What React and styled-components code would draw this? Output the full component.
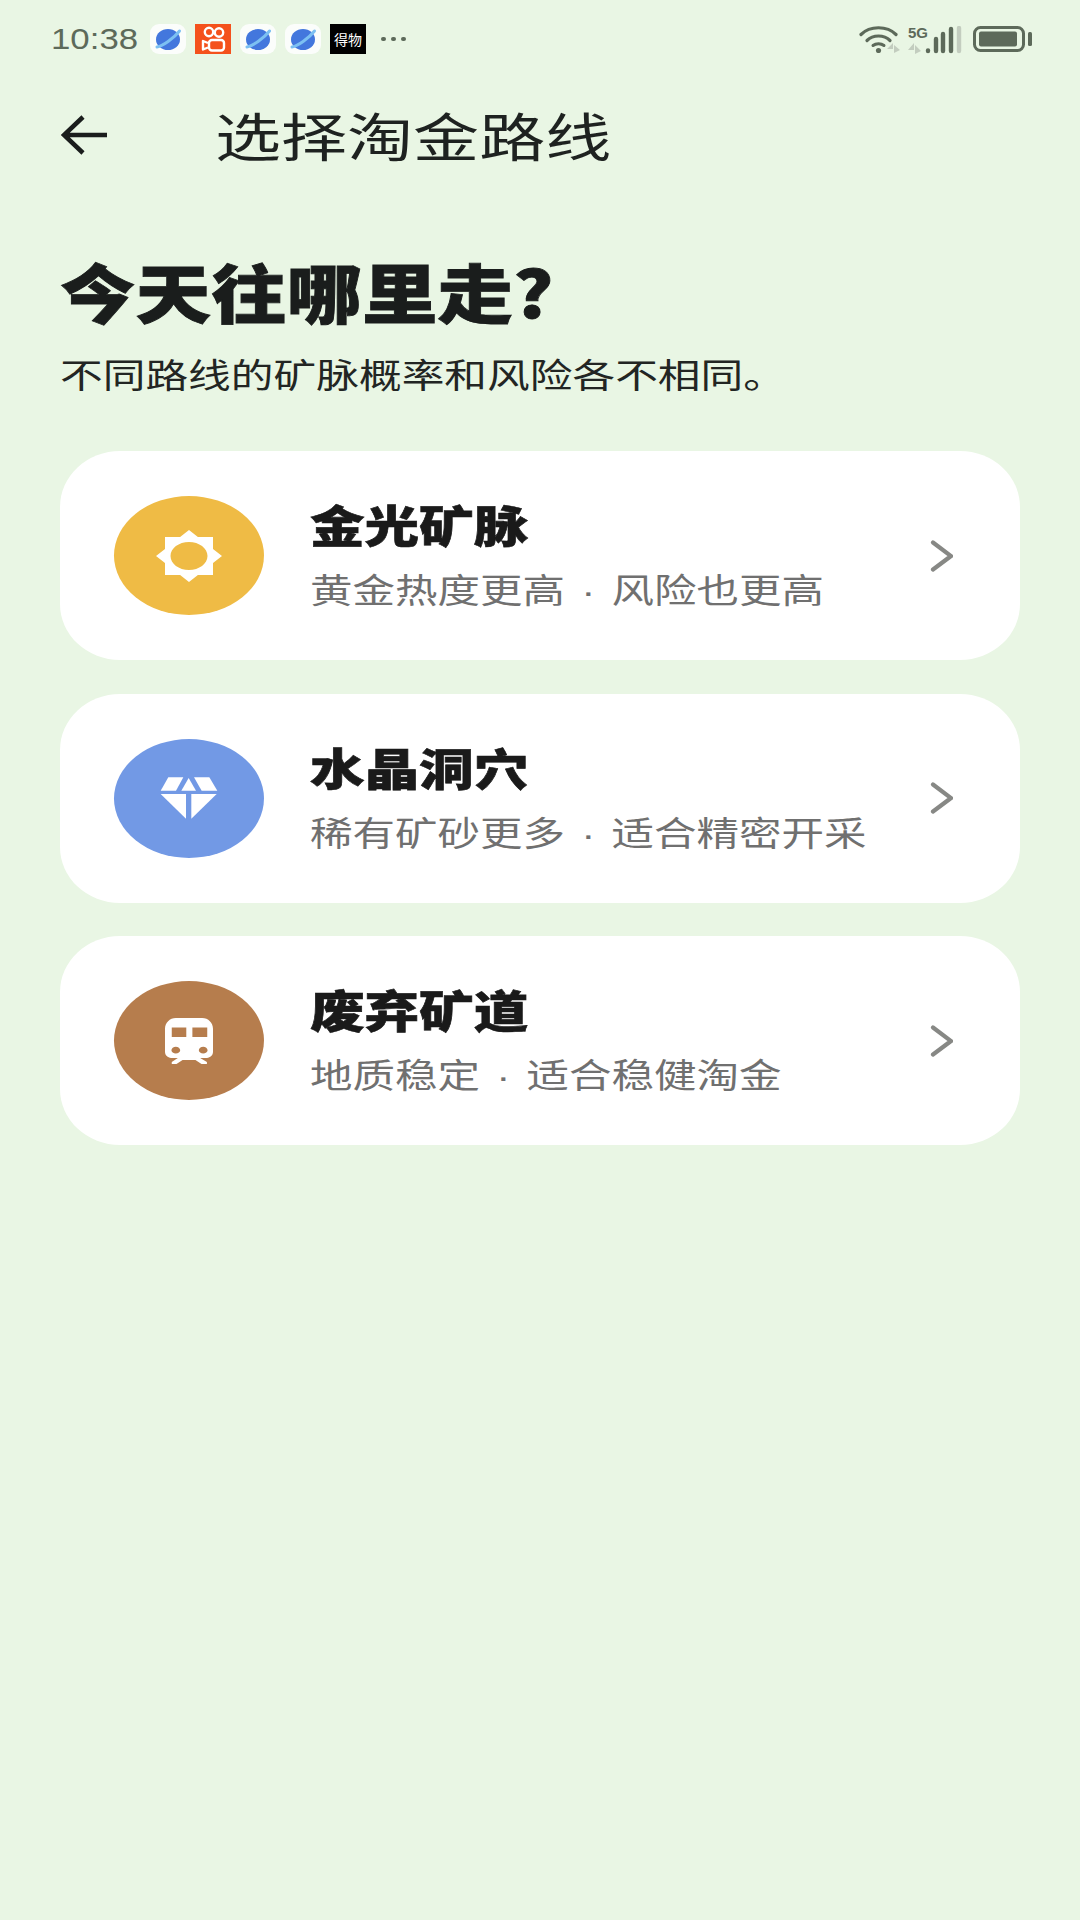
import React from "react";
import styled, { createGlobalStyle } from "styled-components";

const GlobalStyle = createGlobalStyle`
  html, body {
    margin: 0;
    padding: 0;
    background: #e9f6e4;
  }
  * {
    box-sizing: border-box;
  }
`;

const CJK = `"Noto Sans CJK SC", "Noto Sans", sans-serif`;

const Page = styled.div`
  width: 1080px;
  height: 1920px;
  overflow: hidden;
  background: #e9f6e4;
  font-family: ${CJK};
`;

const StatusBar = styled.div`
  height: 78px;
  padding: 0 47px 0 51px;
  display: flex;
  align-items: center;
`;

const Clock = styled.span`
  font-family: "Liberation Sans", sans-serif;
  font-size: 30px;
  color: #5d6a5a;
  width: 99px;
  transform: scaleX(1.16);
  transform-origin: left center;
`;

const NoticeIcons = styled.div`
  display: flex;
  align-items: center;
  gap: 9px;
  flex: 1;
`;

const Notice = styled.div`
  width: 36px;
  height: 30px;
  display: flex;
  align-items: center;
  justify-content: center;
  background: ${(p) => p.$bg};
  border-radius: ${(p) => p.$radius || 0}px;
  color: #fff;
  font-size: 14px;
  line-height: 1;
  white-space: nowrap;
`;

const Dots = styled.div`
  display: flex;
  gap: 5.5px;
  margin-left: 6px;
`;

const Dot = styled.i`
  width: 4.5px;
  height: 4.5px;
  border-radius: 50%;
  background: #5d6a5a;
`;

const SystemIcons = styled.div`
  display: flex;
  align-items: center;
`;

const SignalBox = styled.div`
  position: relative;
  width: 56px;
  height: 26px;
  margin-left: 5px;
`;

const FiveG = styled.span`
  position: absolute;
  left: 2px;
  top: -1px;
  font-family: "Liberation Sans", sans-serif;
  font-weight: 700;
  font-size: 15px;
  line-height: 16px;
  color: #5d6a5a;
`;

const TopBar = styled.div`
  height: 80px;
  margin-top: 17px;
  padding-left: 61px;
  display: flex;
  align-items: center;
`;

const TopTitle = styled.h1`
  margin: 0 0 0 106px;
  font-size: 52px;
  font-weight: 400;
  line-height: 80px;
  color: #1e2220;
  white-space: nowrap;
  transform: scaleX(1.27);
  transform-origin: left center;
`;

const Content = styled.div`
  padding: 0 60px;
`;

const Heading = styled.h2`
  margin: 75px 0 0;
  height: 80px;
  font-size: 64px;
  font-weight: 900;
  line-height: 80px;
  color: #1a1d1c;
  white-space: nowrap;
  -webkit-text-stroke: 0.8px #1a1d1c;
  transform: scaleX(1.18);
  transform-origin: left center;
`;

const SubHeading = styled.p`
  margin: 22px 0 0;
  font-size: 34px;
  line-height: 44px;
  color: #222523;
  white-space: nowrap;
  transform: scaleX(1.256);
  transform-origin: left center;
`;

const CardList = styled.div`
  margin-top: 55px;
  display: flex;
  flex-direction: column;
  gap: 33.5px;
`;

const Card = styled.div`
  height: 209px;
  padding: 0 67px 0 54px;
  display: flex;
  align-items: center;
  background: #fff;
  border-radius: 60px / 56px;
`;

const Badge = styled.div`
  width: 150px;
  height: 119px;
  flex: none;
  display: flex;
  align-items: center;
  justify-content: center;
  border-radius: 50%;
  background: ${(p) => p.$color};
`;

const CardText = styled.div`
  margin: 2px 0 0 46px;
  flex: 1;
  display: flex;
  flex-direction: column;
  gap: 21px;
`;

const CardTitle = styled.div`
  font-size: 44px;
  font-weight: 900;
  line-height: 48px;
  color: #1a1a1a;
  white-space: nowrap;
  -webkit-text-stroke: 0.6px #1a1a1a;
  transform: scaleX(1.24);
  transform-origin: left center;
`;

const CardDesc = styled.div`
  font-family: "Liberation Sans", ${CJK};
  font-size: 34px;
  line-height: 44px;
  word-spacing: 3.5px;
  color: #707070;
  white-space: nowrap;
  transform: scaleX(1.25);
  transform-origin: left center;
`;

const Planet = () => (
  <Notice $bg="#fbfdfb" $radius={9}>
    <svg width="28" height="25" viewBox="0 0 28 25">
      <ellipse cx="14" cy="12.500" rx="12" ry="10.500" fill="#4377dd" />
      <path d="M3 20C9 19 20 11 25.500 4" fill="none" stroke="#7cc0f2" strokeWidth="3" strokeLinecap="round" />
    </svg>
  </Notice>
);

const Kuaishou = () => (
  <Notice $bg="#f4511c">
    <svg width="25" height="26" viewBox="0 0 25 26" fill="none" stroke="#fff" strokeWidth="2.400">
      <circle cx="8" cy="6" r="4.200" />
      <circle cx="18" cy="6.500" r="4.200" />
      <rect x="8" y="14" width="15" height="10.500" rx="3" />
      <path d="M7 17L2 15V23.500L7 21.500" strokeLinejoin="round" />
    </svg>
  </Notice>
);

const Wifi = () => (
  <svg width="42" height="28" viewBox="0 0 42 28" fill="none">
    <path d="M2 9.500C11 0.500 28 0.500 37 9.500" stroke="#5d6a5a" strokeWidth="3.200" strokeLinecap="round" />
    <path d="M8 15.500C14 9.500 25 9.500 31 15.500" stroke="#5d6a5a" strokeWidth="3.200" strokeLinecap="round" />
    <path d="M14 20.500C17 18 22 18 25 20.500" stroke="#5d6a5a" strokeWidth="3" strokeLinecap="round" />
    <circle cx="19.500" cy="25.500" r="2.600" fill="#5d6a5a" />
    <path d="M28 24h6v-6zM35 20v8l6-3z" fill="#c3cdbf" />
  </svg>
);

const Signal = () => (
  <SignalBox>
    <FiveG>5G</FiveG>
    <svg width="56" height="28" viewBox="0 0 56 28" fill="none">
      <path d="M2 24h6v-7zM9 19v9l6-3z" fill="#c3cdbf" />
      <g stroke="#5d6a5a" strokeWidth="4.400" strokeLinecap="round">
        <path d="M22 24.500v0.500" />
        <path d="M30 13v12" />
        <path d="M37 8v17" />
        <path d="M45 3v22" />
      </g>
      <path d="M53 2v23" stroke="#c3cdbf" strokeWidth="4.400" strokeLinecap="round" />
    </svg>
  </SignalBox>
);

const Battery = () => (
  <svg width="60" height="26" viewBox="0 0 60 26" style={{ marginLeft: 11 }}>
    <rect x="1.500" y="1.500" width="49" height="23" rx="6" fill="none" stroke="#5d6a5a" strokeWidth="3" />
    <rect x="6" y="5.500" width="38" height="15" rx="2" fill="#5d6a5a" />
    <rect x="55" y="6" width="4" height="14" rx="1.500" fill="#5d6a5a" />
  </svg>
);

const Sun = () => (
  <svg width="66" height="52" viewBox="0 0 66 52">
    <path
      fill="#fff"
      fillRule="evenodd"
      d="M33 0L41.900 7H57V18.900L66 26L57 33.100V45H41.900L33 52L24.100 45H9V33.100L0 26L9 18.900V7H24.100ZM33 12C22.800 12 14.500 18.300 14.500 26S22.800 40 33 40S51.500 33.700 51.500 26S43.200 12 33 12Z"
    />
  </svg>
);

const Diamond = () => (
  <svg width="58" height="43" viewBox="0 0 174 129" fill="#fff">
    <path d="M25 1H70L48 41H2Z" />
    <path d="M86 3L108 41H64Z" />
    <path d="M102 1H148L172 41H125Z" />
    <path d="M2 51H78V125Z" />
    <path d="M94 51H170L94 125Z" />
  </svg>
);

const Train = () => (
  <svg width="48" height="46" viewBox="0 0 142 136" fill="#fff">
    <path
      fillRule="evenodd"
      d="M32 0H110C128 0 142 14 142 32V100C142 110 134 118 124 118H18C8 118 0 110 0 100V32C0 14 14 0 32 0ZM20 28V56H63V28ZM81 28V56H125V28ZM32 85C25 85 19 90 19 95S25 105 32 105S45 100 45 95S39 85 32 85ZM113 85C106 85 100 90 100 95S106 105 113 105S126 100 126 95S120 85 113 85Z"
    />
    <path d="M38 118L20 130V136H34L52 124H90L108 136H124V130L104 118Z" />
  </svg>
);

const Chevron = () => (
  <svg width="24" height="32" viewBox="0 0 24 32" fill="none">
    <path d="M4 2.500L22 16L4 29.500" stroke="#878885" strokeWidth="4.200" strokeLinecap="round" strokeLinejoin="miter" />
  </svg>
);

const routes = [
  { title: "金光矿脉", desc: "黄金热度更高 · 风险也更高", color: "#efbb45", icon: <Sun /> },
  { title: "水晶洞穴", desc: "稀有矿砂更多 · 适合精密开采", color: "#7299e5", icon: <Diamond /> },
  { title: "废弃矿道", desc: "地质稳定 · 适合稳健淘金", color: "#b67d4d", icon: <Train /> },
];

export default function App() {
  return (
    <Page>
      <GlobalStyle />
      <StatusBar>
        <Clock>10:38</Clock>
        <NoticeIcons>
          <Planet />
          <Kuaishou />
          <Planet />
          <Planet />
          <Notice $bg="#000">得物</Notice>
          <Dots>
            <Dot />
            <Dot />
            <Dot />
          </Dots>
        </NoticeIcons>
        <SystemIcons>
          <Wifi />
          <Signal />
          <Battery />
        </SystemIcons>
      </StatusBar>
      <TopBar>
        <svg width="48" height="40" viewBox="0 0 48 40" fill="none">
          <path d="M46 20H4M22 2L3 20L22 38" stroke="#1a1d1c" strokeWidth="4.500" />
        </svg>
        <TopTitle>选择淘金路线</TopTitle>
      </TopBar>
      <Content>
        <Heading>今天往哪里走?</Heading>
        <SubHeading>不同路线的矿脉概率和风险各不相同。</SubHeading>
        <CardList>
          {routes.map((route) => (
            <Card key={route.title}>
              <Badge $color={route.color}>{route.icon}</Badge>
              <CardText>
                <CardTitle>{route.title}</CardTitle>
                <CardDesc>{route.desc}</CardDesc>
              </CardText>
              <Chevron />
            </Card>
          ))}
        </CardList>
      </Content>
    </Page>
  );
}
